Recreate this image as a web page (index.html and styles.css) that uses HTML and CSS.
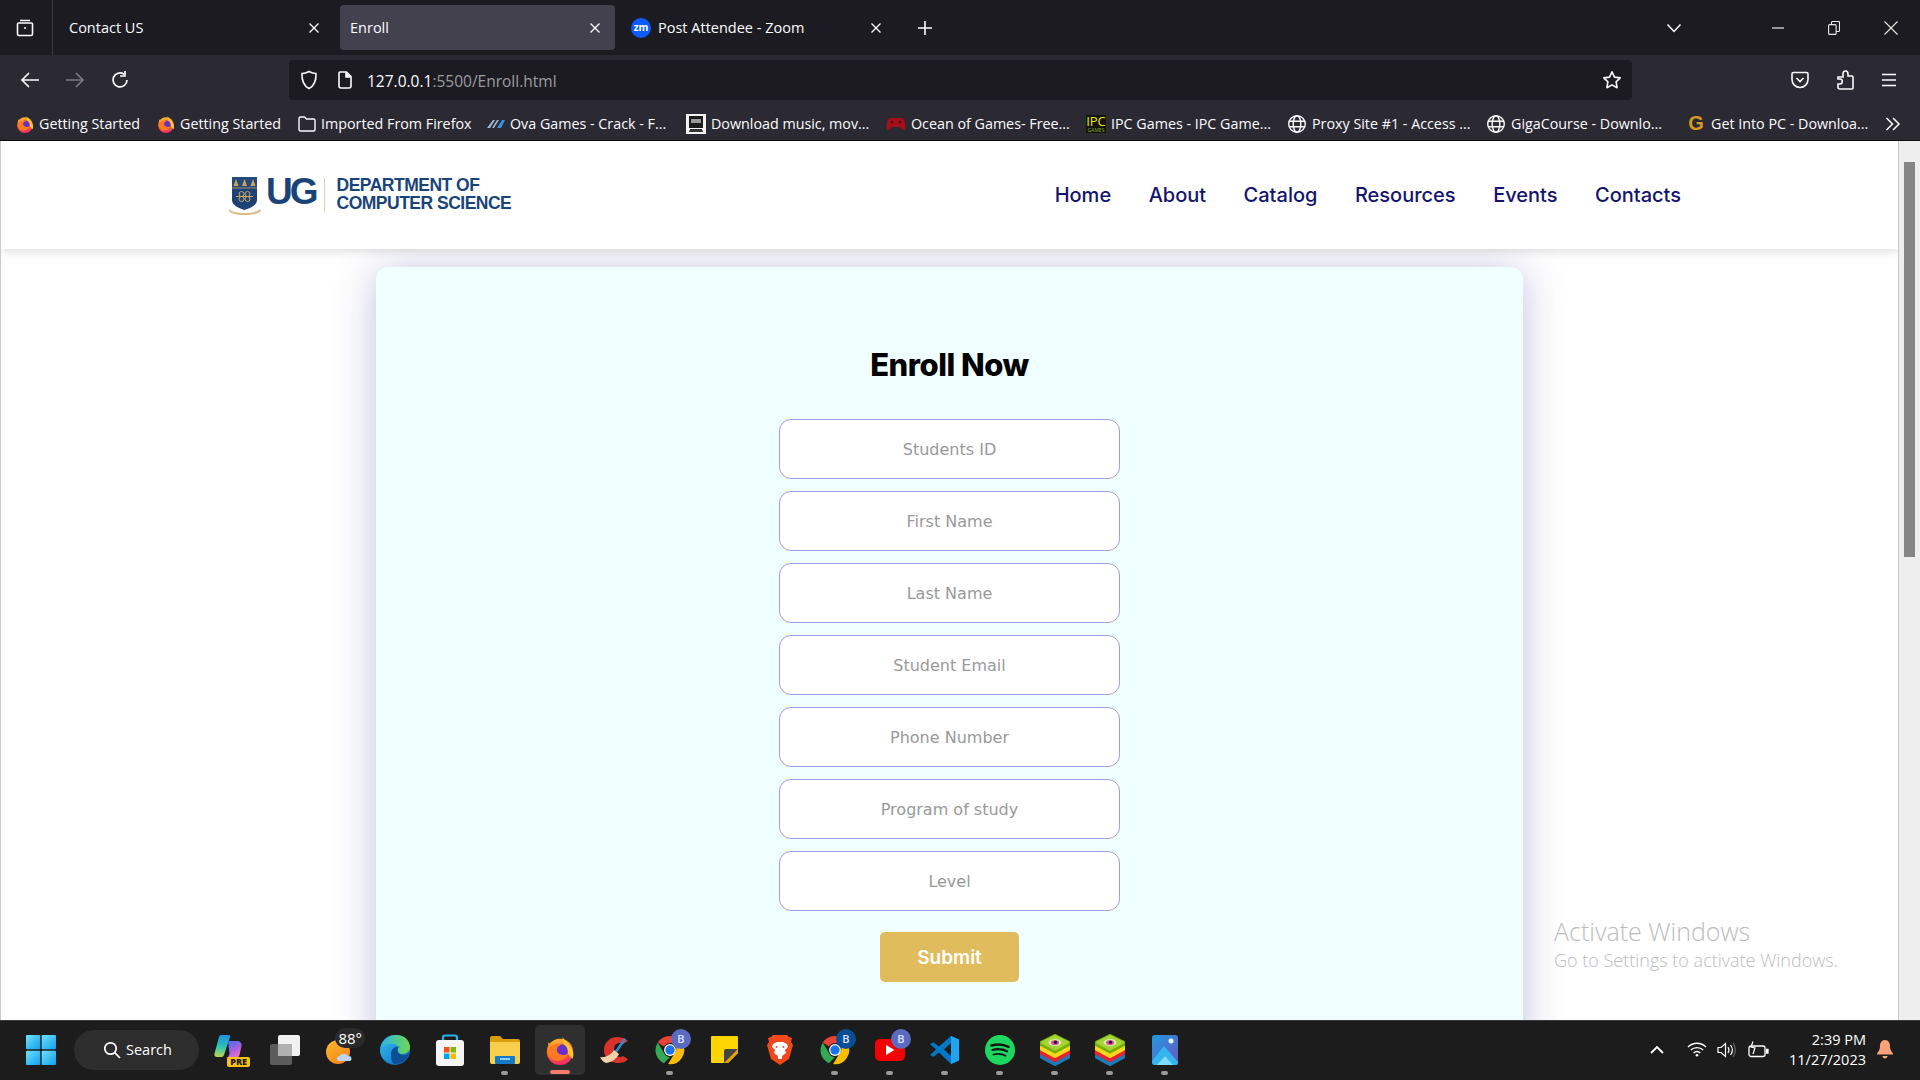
FILE: index.html
```html
<!DOCTYPE html>
<html lang="en">
<head>
  <meta charset="utf-8" />
  <title>Enroll</title>
  <link rel="stylesheet" href="styles.css">
</head>
<body>

<svg class="defs" width="0" height="0">
  <defs>
    <linearGradient id="gFox" x1="0.4" y1="0" x2="0.6" y2="1">
      <stop offset="0" stop-color="#ffb62e"/><stop offset=".5" stop-color="#ff6a2b"/><stop offset="1" stop-color="#f0286a"/>
    </linearGradient>
    <linearGradient id="gSun" x1="0" y1="0" x2="0.7" y2="1">
      <stop offset="0" stop-color="#fdbb2d"/><stop offset="1" stop-color="#f4841c"/>
    </linearGradient>
    <linearGradient id="gEdge" x1="0" y1="0" x2="1" y2="1">
      <stop offset="0" stop-color="#35c1f1"/><stop offset=".55" stop-color="#1b8fd8"/><stop offset="1" stop-color="#0c59a4"/>
    </linearGradient>
    <linearGradient id="gEdge2" x1="0" y1="0" x2="1" y2="0">
      <stop offset="0" stop-color="#2bb6e0"/><stop offset="1" stop-color="#6fd94e"/>
    </linearGradient>
    <linearGradient id="gWin" x1="0" y1="0" x2="1" y2="1">
      <stop offset="0" stop-color="#6fe2fb"/><stop offset="1" stop-color="#0f9ef0"/>
    </linearGradient>
    <linearGradient id="gPilotL" x1="0.5" y1="0" x2="0.4" y2="1">
      <stop offset="0" stop-color="#1f8fe0"/><stop offset=".55" stop-color="#2fc4b8"/><stop offset="1" stop-color="#b7d84a"/>
    </linearGradient>
    <linearGradient id="gPilotR" x1="0.3" y1="0" x2="0.8" y2="1">
      <stop offset="0" stop-color="#4e6fe8"/><stop offset=".5" stop-color="#a85fdc"/><stop offset="1" stop-color="#f07ac0"/>
    </linearGradient>
    <linearGradient id="gPhotos" x1="0" y1="0" x2="1" y2="1">
      <stop offset="0" stop-color="#1f9be0"/><stop offset="1" stop-color="#6a55c0"/>
    </linearGradient>
    <symbol id="fox" viewBox="0 0 24 24">
      <circle cx="12" cy="13.500" r="10.500" fill="url(#gFox)"/>
      <path d="M14 1c1 4 6 5 8 11 1 3 1 5 0 7-3-2-7-8-8-18z" fill="#ffc42e"/>
      <path d="M2.500 5.500c0 3 .5 5 2.500 7l3-4c-2-1-4-1-5.500-3z" fill="#ff9a2a"/>
      <circle cx="12.500" cy="13" r="5.800" fill="#6b2fc9"/>
      <path d="M2.500 12c2-4 7-6 11.500-4-3 0-4.500 2-4.500 4 0 3 4.500 5.500 9 3-2 5.500-9.500 7.500-13.500 3.500-2-2-3-4.500-2.500-6.500z" fill="#ff7a1f"/>
    </symbol>
    <symbol id="globe" viewBox="0 0 20 20">
      <g fill="none" stroke="#fbfbfe" stroke-width="1.4">
        <circle cx="10" cy="10" r="8.3"/><ellipse cx="10" cy="10" rx="3.8" ry="8.3"/>
        <path d="M2 7.300h16M2 12.700h16"/>
      </g>
    </symbol>
    <symbol id="chrome" viewBox="0 0 32 32">
      <path d="M16 1a15 15 0 0 1 13 7.500H16a7.500 7.500 0 0 0-6.500 3.800L3 8A15 15 0 0 1 16 1z" fill="#ea4335"/>
      <path d="M3 8l6.500 11.300A7.500 7.500 0 0 0 16 23.500L9.500 30A15 15 0 0 1 3 8z" fill="#34a853"/>
      <path d="M29 8.500A15 15 0 0 1 14 31l7.500-12.500A7.500 7.500 0 0 0 22.500 12z" fill="#fbbc04"/>
      <circle cx="16" cy="16" r="6.300" fill="#fff"/><circle cx="16" cy="16" r="5" fill="#1a73e8"/>
    </symbol>
    <symbol id="stacks" viewBox="0 0 32 32">
      <g stroke-linejoin="round" stroke-width="2">
        <path d="M16 14L30 20.500v3L16 31 2 23.500v-3z" fill="#1b7bb8" stroke="#1b7bb8"/>
        <path d="M16 10L30 16.500v3L16 27 2 19.500v-3z" fill="#e8222f" stroke="#e8222f"/>
        <path d="M16 6L30 12.500v3L16 23 2 15.500v-3z" fill="#f9d71c" stroke="#f9d71c"/>
        <path d="M16 1L30 8v3L16 18.500 2 11V8z" fill="#74b000" stroke="#74b000"/>
        <path d="M16 2L29 8.500 16 15.500 3 8.500z" fill="#a6d336" stroke="#a6d336"/>
      </g>
      <ellipse cx="16" cy="8.500" rx="6.500" ry="3.500" fill="#d8ecab"/>
      <ellipse cx="16" cy="8.700" rx="4" ry="2.400" fill="#e64aa0"/>
      <circle cx="16.500" cy="8.200" r="1.700" fill="#221a33"/>
    </symbol>
  </defs>
</svg>

<div class="browser">
  <div class="tabbar">
    <div class="view-btn">
      <svg width="20" height="20" viewBox="0 0 20 20" fill="none" stroke="#fbfbfe" stroke-width="1.6"><path d="M5 2.500h10M3.500 5h13a1 1 0 0 1 1 1v10a1.500 1.500 0 0 1-1.500 1.500H4A1.500 1.500 0 0 1 2.500 16V6a1 1 0 0 1 1-1z"/><circle cx="10" cy="10" r="1" fill="#fbfbfe" stroke="none"/></svg>
    </div>
    <div class="tab">
      <span class="tab-title">Contact US</span>
      <svg class="tab-x" width="12" height="12" viewBox="0 0 12 12"><path d="M1.500 1.500l9 9M10.500 1.500l-9 9" stroke="#fbfbfe" stroke-width="1.300"/></svg>
    </div>
    <div class="tab tab-active">
      <span class="tab-title">Enroll</span>
      <svg class="tab-x" width="12" height="12" viewBox="0 0 12 12"><path d="M1.500 1.500l9 9M10.500 1.500l-9 9" stroke="#fbfbfe" stroke-width="1.300"/></svg>
    </div>
    <div class="tab">
      <span class="zm-badge">zm</span>
      <span class="tab-title">Post Attendee - Zoom</span>
      <svg class="tab-x" width="12" height="12" viewBox="0 0 12 12"><path d="M1.500 1.500l9 9M10.500 1.500l-9 9" stroke="#fbfbfe" stroke-width="1.300"/></svg>
    </div>
    <svg class="new-tab" width="16" height="16" viewBox="0 0 16 16"><path d="M8 1v14M1 8h14" stroke="#fbfbfe" stroke-width="1.600"/></svg>
    <div class="window-btns">
      <svg class="tabs-down" width="16" height="10" viewBox="0 0 16 10" fill="none"><path d="M1.500 1.500L8 8.500l6.500-7" stroke="#fbfbfe" stroke-width="1.500"/></svg>
      <svg class="win-btn" width="12" height="2" viewBox="0 0 12 2"><path d="M0 1h12" stroke="#e8e8e8" stroke-width="1.200"/></svg>
      <svg class="win-btn" width="12" height="14" viewBox="0 0 12 14" fill="none" stroke="#e8e8e8" stroke-width="1.100"><rect x=".6" y="3.600" width="7.500" height="9.800" rx="1"/><path d="M3.500 3.500V1.500a1 1 0 0 1 1-1h6a1 1 0 0 1 1 1v8a1 1 0 0 1-1 1H8"/></svg>
      <svg class="win-btn" width="14" height="14" viewBox="0 0 14 14"><path d="M.5.500l13 13M13.500.500l-13 13" stroke="#e8e8e8" stroke-width="1.100"/></svg>
    </div>
  </div>

  <div class="toolbar">
    <div class="nav-btns">
      <svg width="20" height="18" viewBox="0 0 20 18" fill="none" stroke="#fbfbfe" stroke-width="1.700"><path d="M19 9H2M9 2L2 9l7 7"/></svg>
      <svg width="20" height="18" viewBox="0 0 20 18" fill="none" stroke="#7c7b82" stroke-width="1.700"><path d="M1 9h17M11 2l7 7-7 7"/></svg>
      <svg width="20" height="20" viewBox="0 0 20 20" fill="none" stroke="#fbfbfe" stroke-width="1.700"><path d="M17 10a7 7 0 1 1-3-5.800"/><path d="M15 1v5h-5" stroke-width="1.700"/></svg>
    </div>
    <div class="urlbar">
      <svg class="shield" width="18" height="20" viewBox="0 0 18 20" fill="none" stroke="#fbfbfe" stroke-width="1.600"><path d="M9 1.500c2.500 1.500 4.500 2 7 2 .3 7-1 12-7 15-6-3-7.300-8-7-15 2.500 0 4.500-.5 7-2z"/></svg>
      <svg class="page-ico" width="16" height="18" viewBox="0 0 16 18" fill="none" stroke="#fbfbfe" stroke-width="1.600"><path d="M3 1h6.500L14 5.500V15a2 2 0 0 1-2 2H4a2 2 0 0 1-2-2V2a1 1 0 0 1 1-1z"/><path d="M9 1v5h5" fill="#fbfbfe"/></svg>
      <span class="url"><span class="url-host">127.0.0.1</span>:5500/Enroll.html</span>
      <svg class="star" width="20" height="20" viewBox="0 0 20 20" fill="none" stroke="#fbfbfe" stroke-width="1.600"><path d="M10 1.800l2.500 5.300 5.700.8-4.100 4 1 5.800-5.100-2.800-5.100 2.800 1-5.800-4.100-4 5.700-.8z" stroke-linejoin="round"/></svg>
    </div>
    <div class="tool-btns">
      <svg width="20" height="20" viewBox="0 0 20 20" fill="none" stroke="#fbfbfe" stroke-width="1.600"><path d="M3.500 2.500h13a1.500 1.500 0 0 1 1.500 1.500v5.500a8 8 0 0 1-16 0V4a1.500 1.500 0 0 1 1.500-1.500z"/><path d="M6.500 8l3.500 3.500L13.500 8"/></svg>
      <svg width="20" height="22" viewBox="0 0 20 22" fill="none" stroke="#fbfbfe" stroke-width="1.600"><path d="M3 8h5V5c0-4 5-4 5 0v2h4a1 1 0 0 1 1 1v11a1 1 0 0 1-1 1H5a2 2 0 0 1-2-2v-3h2c3 0 3-5 0-5H3z"/></svg>
      <svg width="18" height="16" viewBox="0 0 18 16"><path d="M2 2.500h14M2 8h14M2 13.500h14" stroke="#fbfbfe" stroke-width="1.700"/></svg>
    </div>
  </div>

  <div class="bookmarks">
    <a class="bm bm-w1"><svg class="bm-ico" width="18" height="18"><use href="#fox"/></svg>Getting Started</a>
    <a class="bm bm-w2"><svg class="bm-ico" width="18" height="18"><use href="#fox"/></svg>Getting Started</a>
    <a class="bm bm-w3"><svg class="bm-ico" width="18" height="18" viewBox="0 0 18 18" fill="none" stroke="#fbfbfe" stroke-width="1.400"><path d="M1 3.500A1.500 1.500 0 0 1 2.500 2h4L8.500 4H15.500A1.500 1.500 0 0 1 17 5.500v9a1.500 1.500 0 0 1-1.500 1.500h-13A1.500 1.500 0 0 1 1 14.500z"/></svg>Imported From Firefox</a>
    <a class="bm bm-w4"><svg class="bm-ico" width="18" height="12" viewBox="0 0 18 12"><path d="M0 10L6 2h2L3 10zM5 10l5-8h2l-5 8z" fill="#9bb7d8"/><path d="M10 10l5-8h3l-4 8z" fill="#3d8fe0"/></svg>Ova Games - Crack - F...</a>
    <a class="bm bm-w5"><svg class="bm-ico" width="20" height="20" viewBox="0 0 20 20"><rect width="20" height="20" fill="#f4f4f4"/><rect x="3" y="2" width="14" height="12" fill="#1b1b1b"/><rect x="5" y="5" width="10" height="4" fill="#9a9a9a"/><path d="M4 15h12l1 3H3z" fill="#333"/></svg>Download music, mov...</a>
    <a class="bm bm-w6"><svg class="bm-ico" width="20" height="16" viewBox="0 0 20 16"><path d="M4 2h12c3 0 4 8 3 11-1 2-3 1-5-2H6c-2 3-4 4-5 2C0 10 1 2 4 2z" fill="#a3101c"/><circle cx="6" cy="6" r="1.500" fill="#5b0910"/><circle cx="14" cy="6" r="1.500" fill="#5b0910"/></svg>Ocean of Games- Free...</a>
    <a class="bm bm-w7"><span class="ipc"><span class="ipc-top">IPC</span><span class="ipc-sub">GAMES</span></span>IPC Games - IPC Game...</a>
    <a class="bm bm-w8"><svg class="bm-ico" width="20" height="20"><use href="#globe"/></svg>Proxy Site #1 - Access ...</a>
    <a class="bm bm-w9"><svg class="bm-ico" width="20" height="20"><use href="#globe"/></svg>GigaCourse - Downlo...</a>
    <a class="bm bm-w10"><span class="g-ico">G</span>Get Into PC - Downloa...</a>
    <svg class="bm-more" width="16" height="14" viewBox="0 0 16 14" fill="none" stroke="#fbfbfe" stroke-width="1.500"><path d="M1.500 1l6 6-6 6M8 1l6 6-6 6"/></svg>
  </div>

  <div class="viewport">
    <div class="page">
      <header class="site-header">
        <div class="logo">
          <div class="crest">
            <svg width="32" height="38" viewBox="0 0 32 38">
              <path d="M3 0h25v23c0 5-6 8-12.500 10C9 31 3 28 3 23z" fill="#1c4276"/>
              <path d="M3 0h25v11H3z" fill="#24497a"/>
              <path d="M3 11h25" stroke="#c9a75e" stroke-width=".8"/>
              <g fill="#c9a75e"><path d="M7 2l2.500 7h-5zM15.500 2L18 9h-5zM24 2l2.500 7h-5z"/></g>
              <g fill="none" stroke="#c9a75e" stroke-width="1"><circle cx="12.500" cy="17" r="2.500"/><circle cx="18.500" cy="17" r="2.500"/><circle cx="12.500" cy="22" r="2.500"/><circle cx="18.500" cy="22" r="2.500"/><path d="M7 19.500h17"/></g>
              <path d="M0 32c3 3 8 4 15.500 4S28 35 31 32l1 2c-3 3-9 4-16.500 4S3 37 0 34z" fill="#d6bd84"/>
            </svg>
          </div>
          <span class="ug">UG</span>
          <span class="logo-rule"></span>
          <span class="dept">DEPARTMENT OF<br>COMPUTER SCIENCE</span>
        </div>
        <nav class="site-nav">
          <a>Home</a><a>About</a><a>Catalog</a><a>Resources</a><a>Events</a><a>Contacts</a>
        </nav>
      </header>

      <section class="enroll-card">
        <h1>Enroll Now</h1>
        <form class="enroll-form">
          <input type="text" placeholder="Students ID">
          <input type="text" placeholder="First Name">
          <input type="text" placeholder="Last Name">
          <input type="text" placeholder="Student Email">
          <input type="text" placeholder="Phone Number">
          <input type="text" placeholder="Program of study">
          <input type="text" placeholder="Level">
          <button type="button">Submit</button>
        </form>
      </section>

      <div class="activate">
        <div class="activate-big">Activate Windows</div>
        <div class="activate-small">Go to Settings to activate Windows.</div>
      </div>
    </div>
    <div class="scrollbar"><div class="thumb"></div></div>
  </div>
</div>

<footer class="taskbar">
  <svg class="start" width="30" height="30" viewBox="0 0 30 30"><g fill="url(#gWin)"><rect width="14.300" height="14.300" rx="1"/><rect x="15.700" width="14.300" height="14.300" rx="1"/><rect y="15.700" width="14.300" height="14.300" rx="1"/><rect x="15.700" y="15.700" width="14.300" height="14.300" rx="1"/></g></svg>
  <div class="search-pill">
    <svg width="18" height="18" viewBox="0 0 18 18" fill="none" stroke="#fff" stroke-width="1.700"><circle cx="7.500" cy="7.500" r="5.700"/><path d="M11.700 11.700L17 17"/></svg>
    <span>Search</span>
  </div>
  <div class="task-icons">
    <div class="task-item">
      <svg class="pilot" width="28" height="26" viewBox="0 0 28 26"><path d="M8 1h7c1 0 1.500 1 1 2L10 21c-.5 1.500-1.500 2-3 2H3c-2 0-3-1.500-2.500-3.500L5 3c.5-1.500 1.500-2 3-2z" fill="url(#gPilotL)"/><path d="M14 7h9c3 0 5 2 4.500 5l-2 9c-.5 2-2 3-4 3H12c2-1 3-2 3.500-4z" fill="url(#gPilotR)"/></svg>
      <span class="pre-tag">PRE</span>
    </div>
    <div class="task-item">
      <svg width="30" height="30" viewBox="0 0 30 30"><rect x="0" y="9" width="22" height="21" rx="2" fill="#5b5b5b"/><rect x="8" y="0" width="22" height="21" rx="2" fill="#f1f1f1"/><rect x="8" y="9" width="14" height="12" fill="#b0b0b0"/></svg>
    </div>
    <div class="task-item">
      <svg class="sun" width="30" height="26" viewBox="0 0 30 26"><circle cx="12" cy="13" r="12" fill="url(#gSun)"/><path d="M13 22c-3 0-3-5 1-5 1-3 7-3 8 0 4-1 5 5 1 5z" fill="#bcd4ee"/></svg>
      <span class="temp">88°</span>
    </div>
    <div class="task-item">
      <svg width="32" height="32" viewBox="0 0 32 32"><circle cx="16" cy="16" r="15" fill="url(#gEdge)"/><path d="M3 11C6 3 13 1 18 1c7 0 13 5 13 12 0 4-3 7-8 7-3 0-5-1-5-3 2-1 2-6-3-7-5-1-9 2-12 1z" fill="url(#gEdge2)"/><path d="M12 20c0-6 6-9 9-7-3 0-3 3-1 6s7 3 10 0c-2 7-8 11-14 11-3 0-4-5-4-10z" fill="#0d4f94"/></svg>
    </div>
    <div class="task-item">
      <svg width="30" height="32" viewBox="0 0 30 32"><path d="M8 7V3.500A2 2 0 0 1 10 1.500h10a2 2 0 0 1 2 2V7" fill="none" stroke="#22b4ea" stroke-width="2.200"/><rect x="1" y="6" width="28" height="26" rx="3" fill="#f5f5f5"/><rect x="9" y="13" width="5.500" height="5.500" fill="#f25022"/><rect x="15.500" y="13" width="5.500" height="5.500" fill="#7fba00"/><rect x="9" y="19.500" width="5.500" height="5.500" fill="#00a4ef"/><rect x="15.500" y="19.500" width="5.500" height="5.500" fill="#ffb900"/></svg>
    </div>
    <div class="task-item task-dot">
      <svg width="30" height="28" viewBox="0 0 30 28"><path d="M0 2a2 2 0 0 1 2-2h8l3 3h15a2 2 0 0 1 2 2v5H0z" fill="#d99e0a"/><path d="M0 6h30v20a2 2 0 0 1-2 2H2a2 2 0 0 1-2-2z" fill="#f8cf4a"/><rect x="5" y="20" width="20" height="8" rx="1" fill="#1679c7"/><rect x="10" y="22" width="10" height="2" fill="#8cd0f5"/></svg>
    </div>
    <div class="task-item task-open">
      <svg width="30" height="30"><use href="#fox"/></svg>
    </div>
    <div class="task-item">
      <svg width="30" height="30" viewBox="0 0 30 30"><path d="M16 2a13 13 0 0 0 2 26c4 0 8-1 10-4l-5-3c-3 2-9 1-9-6s5-8 9-6l5-3c-3-3-7-4-12-4z" fill="#d8322a"/><path d="M24 3l2 1.500-9 13-2-1.500z" fill="#2c8ed6"/><path d="M14 15l5 4c-2 4-6 8-13 9-3-1-5-4-6-6 5 1 11-2 14-7z" fill="#eed3a8"/></svg>
    </div>
    <div class="task-item task-dot">
      <svg width="30" height="30"><use href="#chrome"/></svg>
      <span class="profile-badge">B</span>
    </div>
    <div class="task-item">
      <svg width="27" height="27" viewBox="0 0 27 27"><path d="M1 0h25a1 1 0 0 1 1 1v16L17 27H1a1 1 0 0 1-1-1V1a1 1 0 0 1 1-1z" fill="#ffd500"/><path d="M13 27V15a2 2 0 0 1 2-2h12L15 27z" fill="#444"/><path d="M27 13v4L17 27h-4z" fill="#e5a400"/></svg>
    </div>
    <div class="task-item">
      <svg width="26" height="31" viewBox="0 0 26 31"><path d="M6 1h14l2 2 3 1-1 4 2 3-4 14-9 6-9-6L0 11l2-3-1-4 3-1z" fill="#f1491c"/><path d="M6 10l4-2h6l4 2 1 3-3 3 1 3-4 3v3h-4v-3l-4-3 1-3-3-3z" fill="#fff"/><circle cx="9.500" cy="13" r="1" fill="#f1491c"/><circle cx="16.500" cy="13" r="1" fill="#f1491c"/></svg>
    </div>
    <div class="task-item task-dot">
      <svg width="30" height="30"><use href="#chrome"/></svg>
      <span class="profile-badge badge-dark">B</span>
    </div>
    <div class="task-item task-dot">
      <svg width="30" height="22" viewBox="0 0 30 22"><rect width="30" height="22" rx="5" fill="#f40000"/><path d="M11 6l8.500 5-8.500 5z" fill="#fff"/></svg>
      <span class="profile-badge">B</span>
    </div>
    <div class="task-item task-dot">
      <svg width="30" height="30" viewBox="0 0 30 30"><path d="M21 1l8 3.500v21L21 29 9 17.500l-5.500 4.200L0 20l6-5.500L0 9l3.500-1.800L9 11.500z" fill="#0078c8"/><path d="M21 1l8 3.500v21L21 29z" fill="#1ca5f0"/><path d="M21 8l-7 6.500 7 6.500z" fill="#1c1c1c"/></svg>
    </div>
    <div class="task-item task-dot">
      <svg width="30" height="30" viewBox="0 0 30 30"><circle cx="15" cy="15" r="15" fill="#1ed760"/><g fill="none" stroke="#141414" stroke-linecap="round"><path d="M6.500 10.500c6-1.700 12-1.300 17 1.300" stroke-width="2.500"/><path d="M7.500 15c5-1.300 10-1 14.500 1.300" stroke-width="2.200"/><path d="M8.500 19.500c4-1 8.500-.8 12 1.200" stroke-width="1.800"/></g></svg>
    </div>
    <div class="task-item task-dot">
      <svg width="32" height="32"><use href="#stacks"/></svg>
    </div>
    <div class="task-item task-dot">
      <svg width="32" height="32"><use href="#stacks"/></svg>
    </div>
    <div class="task-item task-dot">
      <svg width="26" height="30" viewBox="0 0 26 30"><rect width="26" height="30" rx="3" fill="url(#gPhotos)"/><circle cx="19" cy="6" r="2.500" fill="#e9f4ff"/><path d="M0 26l12-15 14 16v1a2 2 0 0 1-2 2H3a3 3 0 0 1-3-3z" fill="#33b5ee"/><path d="M5 30l8-9 8 9z" fill="#7fdcfb"/></svg>
    </div>
  </div>
  <div class="tray">
    <svg class="tray-chev" width="14" height="9" viewBox="0 0 14 9" fill="none" stroke="#fff" stroke-width="1.800"><path d="M1 8l6-6 6 6"/></svg>
    <svg class="tray-wifi" width="20" height="15" viewBox="0 0 20 15" fill="none" stroke="#fff" stroke-width="1.300"><path d="M1 5c5-5 13-5 18 0M3.800 8c3.500-3.300 9-3.300 12.400 0M6.600 11c2-1.800 4.800-1.800 6.800 0"/><circle cx="10" cy="13.300" r="1.300" fill="#fff" stroke="none"/></svg>
    <svg class="tray-vol" width="20" height="16" viewBox="0 0 20 16" fill="none" stroke="#fff" stroke-width="1.200"><path d="M1 5.500h3L8.500 1.500v13L4 10.500H1z"/><path d="M11 5c1.300 2 1.300 4 0 6M13.500 3c2.300 3 2.300 7 0 10"/><path d="M16 1c3 4 3 10 0 14" stroke="#666"/></svg>
    <svg class="tray-bat" width="21" height="18" viewBox="0 0 21 18" fill="none" stroke="#fff" stroke-width="1.300"><rect x="1" y="5" width="16" height="10.500" rx="2"/><path d="M18 8.500h2v3.500h-2" fill="#fff"/><path d="M5 .500L3 6l4 1-2 6" stroke-width="1.200"/></svg>
    <div class="clock"><div>2:39 PM</div><div>11/27/2023</div></div>
    <svg class="tray-bell" width="16" height="19" viewBox="0 0 16 19"><path d="M8 0c3.500 0 5 3 5 6 0 4 1.500 5.500 3 7.500v1H0v-1C1.500 11.500 3 10 3 6c0-3 1.500-6 5-6z" fill="#f9a27a"/><path d="M5.500 16h5c0 1.500-1 2.500-2.500 2.500S5.500 17.500 5.500 16z" fill="#f9a27a"/></svg>
  </div>
</footer>

</body>
</html>
```

FILE: styles.css
```css
* {
  box-sizing: border-box;
}

html, body {
  height: 100%;
}

body {
  margin: 0;
  display: flex;
  flex-direction: column;
  height: 1080px;
  overflow: hidden;
  background-color: #fff;
  font-family: "Open Sans", "Noto Sans", sans-serif;
}

.defs {
  position: absolute;
}

.browser {
  flex: 1;
  min-height: 0;
  display: flex;
  flex-direction: column;
}

/* tab strip */
.tabbar {
  height: 55px;
  flex-shrink: 0;
  display: flex;
  align-items: center;
  background-color: #1c1b22;
  color: #fbfbfe;
  font-size: 14.5px;
}

.view-btn {
  width: 53px;
  height: 55px;
  display: flex;
  align-items: center;
  justify-content: center;
  padding-right: 3px;
  border-right: 1px solid #3a3940;
}

.tab {
  width: 275px;
  height: 45px;
  margin-left: 6px;
  padding: 0 14px 0 10px;
  display: flex;
  align-items: center;
  border-radius: 4px;
}

.tab:first-of-type {
  margin-left: 5px;
}

.tab-active {
  background-color: #42414d;
}

.tab-title {
  flex: 1;
}

.zm-badge {
  width: 20px;
  height: 20px;
  margin-right: 7px;
  margin-left: 0;
  border-radius: 50%;
  background-color: #0b5cff;
  color: #fff;
  font-size: 10px;
  font-weight: 700;
  line-height: 19px;
  text-align: center;
}

.new-tab {
  margin-left: 21px;
}

.window-btns {
  flex: 1;
  display: flex;
  align-items: center;
  justify-content: flex-end;
  padding-right: 22px;
}

.tabs-down {
  margin-right: 46px;
}

.win-btn {
  margin-left: 44px;
}

/* toolbar */
.toolbar {
  height: 50px;
  flex-shrink: 0;
  display: flex;
  align-items: center;
  background-color: #2b2a33;
  color: #fbfbfe;
}

.nav-btns {
  width: 289px;
  padding-left: 20px;
  display: flex;
  align-items: center;
  gap: 25px;
}

.urlbar {
  width: 1343px;
  height: 40px;
  padding: 0 10px;
  display: flex;
  align-items: center;
  border-radius: 4px;
  background-color: #1c1b22;
  font-size: 15.5px;
}

.shield {
  margin-left: 1px;
}

.page-ico {
  margin-left: 19px;
}

.url {
  flex: 1;
  margin-left: 14px;
  padding-top: 2px;
  color: #9b9ba0;
}

.url-host {
  color: #fbfbfe;
}

.tool-btns {
  flex: 1;
  padding-left: 158px;
  display: flex;
  align-items: center;
  gap: 25px;
}

/* bookmarks */
.bookmarks {
  height: 36px;
  flex-shrink: 0;
  display: flex;
  align-items: center;
  padding: 2px 0 0 16px;
  background-color: #2b2a33;
  border-bottom: 1px solid #0c0c0e;
  color: #fbfbfe;
  font-size: 14.3px;
  white-space: nowrap;
}

.bm {
  display: flex;
  align-items: center;
  flex-shrink: 0;
}

.bm-ico {
  margin-right: 5px;
  flex-shrink: 0;
}

.bm-w1, .bm-w2 { width: 141px; }
.bm-w3 { width: 189px; }
.bm-w4 { width: 199px; }
.bm-w5 { width: 200px; }
.bm-w6 { width: 200px; }
.bm-w7 { width: 201px; }
.bm-w8 { width: 199px; }
.bm-w9 { width: 200px; }
.bm-w10 { width: 190px; }

.bm-more {
  margin-left: 9px;
}

.ipc {
  width: 20px;
  margin-right: 5px;
  display: flex;
  flex-direction: column;
  align-items: center;
  background-color: #14140c;
  line-height: 1;
}

.ipc-top {
  color: #e5e81e;
  font-size: 13px;
}

.ipc-sub {
  color: #8fa82e;
  font-size: 5px;
}

.g-ico {
  width: 20px;
  margin-right: 5px;
  color: #d39a1d;
  font-family: "Liberation Sans", sans-serif;
  font-size: 20px;
  font-weight: 700;
  text-align: center;
}

/* page */
.viewport {
  flex: 1;
  min-height: 0;
  display: flex;
}

.page {
  flex: 1;
  position: relative;
  overflow: hidden;
  border-left: 1px solid #c9c9c9;
  border-right: 1px solid #c9c9c9;
  background-color: #fff;
}

.scrollbar {
  width: 21px;
  padding: 21px 5px 0 5px;
  background-color: #eee;
}

.thumb {
  width: 11px;
  height: 395px;
  background-color: #858585;
}

.site-header {
  height: 108px;
  padding: 0 217px 0 228px;
  display: flex;
  align-items: center;
  justify-content: space-between;
  position: relative;
  background-color: #fff;
  box-shadow: 0 2px 10px rgba(0, 0, 0, 0.15);
}

.logo {
  display: flex;
  align-items: center;
  color: #1a4478;
}

.crest {
  margin-top: 2px;
  display: flex;
}

.ug {
  margin-left: 5px;
  margin-top: -6px;
  font-family: "Liberation Sans", sans-serif;
  font-size: 37px;
  font-weight: 700;
  letter-spacing: -3px;
  line-height: 36px;
}

.logo-rule {
  width: 1px;
  height: 34px;
  margin: 0 12px 0 8px;
  background-color: #dbcdb0;
}

.dept {
  margin-top: -2px;
  font-family: "Liberation Sans", sans-serif;
  font-size: 17.5px;
  font-weight: 700;
  line-height: 18.500px;
  letter-spacing: -0.5px;
}

.site-nav {
  display: flex;
  gap: 37.500px;
}

.site-nav a {
  color: #14146e;
  font-family: Inter, sans-serif;
  font-size: 20px;
  font-weight: 500;
}

.enroll-card {
  width: 1147px;
  height: 900px;
  margin: 18px auto 0;
  padding: 79px 0 0;
  border-radius: 12px;
  background-color: #f0ffff;
  box-shadow: 0 4px 40px rgba(80, 80, 170, 0.36);
}

.enroll-card h1 {
  margin: 0 0 35px;
  color: #000;
  font-family: Inter, sans-serif;
  font-size: 31px;
  font-weight: 800;
  line-height: 38px;
  text-align: center;
  letter-spacing: -0.5px;
}

.enroll-form {
  display: flex;
  flex-direction: column;
  align-items: center;
  gap: 12px;
}

.enroll-form input {
  width: 341px;
  height: 60px;
  border: 1px solid #a29bea;
  border-radius: 12px;
  background-color: #fff;
  font-family: "DejaVu Sans", sans-serif;
  font-size: 16px;
  text-align: center;
}

.enroll-form input::placeholder {
  color: #999;
  opacity: 1;
}

.enroll-form button {
  width: 139px;
  height: 50px;
  margin-top: 9px;
  border: 0;
  border-radius: 5px;
  background-color: #e1bc5c;
  color: #fff;
  font-family: Inter, sans-serif;
  font-size: 19px;
  font-weight: 600;
}

.activate {
  position: absolute;
  left: 1553px;
  top: 775px;
  color: #bdbdbd;
  font-family: "Open Sans", sans-serif;
  font-weight: 300;
}

.activate-big {
  font-size: 25px;
  line-height: 30px;
}

.activate-small {
  font-size: 18px;
  line-height: 28px;
}

/* taskbar */
.taskbar {
  height: 60px;
  flex-shrink: 0;
  display: flex;
  align-items: center;
  padding: 0 0 2px 26px;
  border-top: 1px solid #3a3a3a;
  background-color: #1c1c1c;
  color: #fff;
}

.start {
  flex-shrink: 0;
}

.search-pill {
  width: 125px;
  height: 40px;
  margin-left: 18px;
  padding-left: 29px;
  display: flex;
  align-items: center;
  gap: 5px;
  border-radius: 20px;
  background-color: #2d2d2d;
  font-size: 14.500px;
}

.task-icons {
  margin-left: 3px;
  display: flex;
}

.task-item {
  width: 55px;
  height: 50px;
  position: relative;
  display: flex;
  align-items: center;
  justify-content: center;
}

.task-dot::after {
  content: "";
  position: absolute;
  bottom: 0;
  left: 24px;
  width: 7px;
  height: 4px;
  border-radius: 2px;
  background-color: #9a9a9a;
}

.task-open {
  border-radius: 5px;
  background-color: #2f2f2f;
  margin: 0 2.500px;
  width: 50px;
}

.task-open::after {
  content: "";
  position: absolute;
  bottom: 1px;
  left: 15px;
  width: 20px;
  height: 4px;
  border-radius: 2px;
  background-color: #f47c6a;
}

.pilot {
  margin: -5px 0 0 -3px;
}

.pre-tag {
  position: absolute;
  right: 7px;
  bottom: 8px;
  padding: 0 3px;
  border-radius: 2px;
  background-color: #fdc20f;
  color: #1c1c1c;
  font-size: 9px;
  font-weight: 800;
  line-height: 10px;
}

.sun {
  margin: 5px 0 0 3px;
}

.temp {
  position: absolute;
  top: 3px;
  right: 2px;
  padding: 0 3px;
  border-radius: 10px;
  background-color: #2a2a2a;
  font-size: 15px;
  line-height: 20px;
}

.profile-badge {
  position: absolute;
  top: 4px;
  right: 6px;
  width: 20px;
  height: 20px;
  border-radius: 50%;
  background-color: #5c6bc0;
  color: #dfe3ff;
  font-size: 11px;
  font-weight: 600;
  line-height: 20px;
  text-align: center;
}

.badge-dark {
  background-color: #0a4f96;
}

.tray {
  margin-left: auto;
  padding-right: 27px;
  display: flex;
  align-items: center;
}

.tray-wifi { margin-left: 23px; }
.tray-vol { margin-left: 10px; }
.tray-bat { margin-left: 11px; }

.clock {
  margin-left: 20px;
  font-size: 14.500px;
  line-height: 20px;
  text-align: right;
}

.tray-bell {
  margin-left: 11px;
}
```
